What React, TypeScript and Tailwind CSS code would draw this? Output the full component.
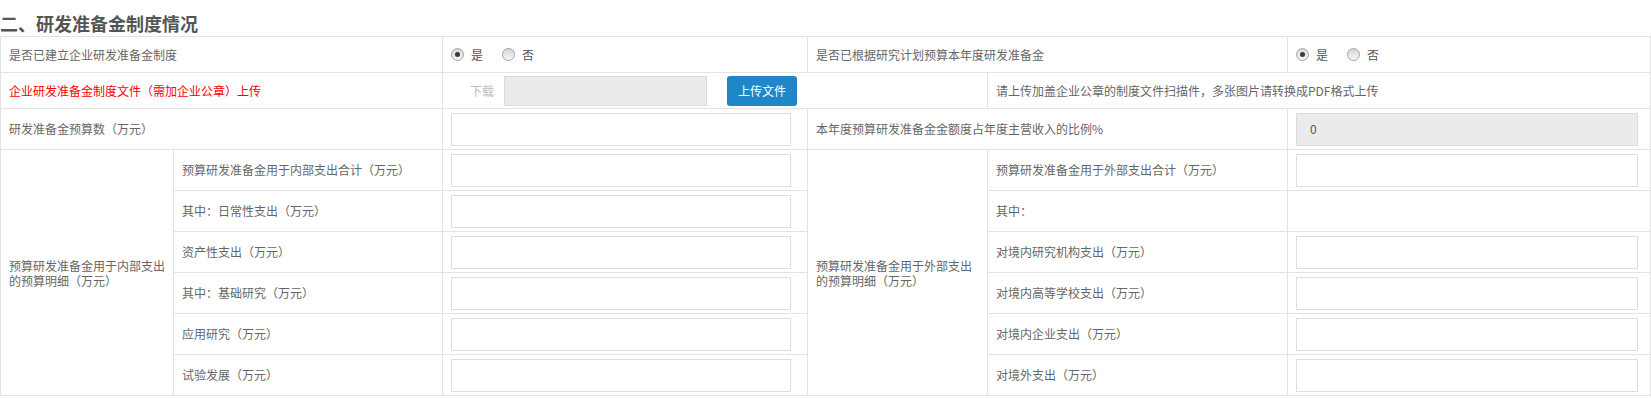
import React from "react";

const font = { fontFamily: '"Noto Sans CJK SC", "Noto Sans", sans-serif' };

function Radio({ checked }: { checked?: boolean }) {
  return (
    <span className="w-[13px] h-[13px] rounded-full border border-[#a3a3a3] bg-linear-to-b from-[#d6d6d6] to-[#f7f7f7] flex items-center justify-center shrink-0">
      {checked && <span className="w-[5px] h-[5px] rounded-full bg-[#3a3a3a]" />}
    </span>
  );
}

function YesNo() {
  return (
    <div className="flex items-center text-[#555]">
      <Radio checked />
      <span className="ml-[7px]">是</span>
      <span className="ml-[19px]">
        <Radio />
      </span>
      <span className="ml-[7px]">否</span>
    </div>
  );
}

function Field() {
  return <div className="w-[340px] h-[33px] border border-[#dedede] bg-white" />;
}

const cell = "border-r border-b border-[#e3e3e3] px-2 flex items-center";

const inner = [
  "预算研发准备金用于内部支出合计（万元）",
  "其中：日常性支出（万元）",
  "资产性支出（万元）",
  "其中：基础研究（万元）",
  "应用研究（万元）",
  "试验发展（万元）",
];

const outer = [
  { label: "预算研发准备金用于外部支出合计（万元）", input: true },
  { label: "其中：", input: false },
  { label: "对境内研究机构支出（万元）", input: true },
  { label: "对境内高等学校支出（万元）", input: true },
  { label: "对境内企业支出（万元）", input: true },
  { label: "对境外支出（万元）", input: true },
];

export default function App() {
  return (
    <div className="w-[1651px] h-[398px] bg-white text-[12px] text-[#666]" style={font}>
      {/* 标题 */}
      <div className="h-[36px] pt-[11px] text-[18px] leading-[24px] font-bold text-[#555] whitespace-nowrap">
        二、研发准备金制度情况
      </div>

      <div className="grid grid-cols-[173px_269px_365px_180px_300px_1fr] grid-rows-[36px_36px_41px_41px_41px_41px_41px_41px_41px] border-t border-l border-[#e3e3e3]">
        {/* 第一行 */}
        <div className={`${cell} col-span-2`}>是否已建立企业研发准备金制度</div>
        <div className={cell}>
          <YesNo />
        </div>
        <div className={`${cell} col-span-2`}>是否已根据研究计划预算本年度研发准备金</div>
        <div className={cell}>
          <YesNo />
        </div>

        {/* 上传 */}
        <div className={`${cell} col-span-2 text-[#ff0000]`}>企业研发准备金制度文件（需加企业公章）上传</div>
        <div className="col-span-2 border-r border-b border-[#e3e3e3] pl-[27px] flex items-center">
          <span className="text-[#bdbdbd]">下载</span>
          <div className="ml-[10px] w-[203px] h-[30px] bg-[#ebebeb] border border-[#dcdcdc]" />
          <button className="ml-[20px] w-[70px] h-[30px] rounded-[3px] bg-[#1f87c8] text-white text-[12px]">
            上传文件
          </button>
        </div>
        <div className={`${cell} col-span-2`}>请上传加盖企业公章的制度文件扫描件，多张图片请转换成PDF格式上传</div>

        {/* 预算数 */}
        <div className={`${cell} col-span-2`}>研发准备金预算数（万元）</div>
        <div className={cell}>
          <Field />
        </div>
        <div className={`${cell} col-span-2`}>本年度预算研发准备金金额度占年度主营收入的比例%</div>
        <div className={cell}>
          <div className="w-[342px] h-[33px] bg-[#ebebeb] border border-[#dcdcdc] pl-[13px] flex items-center text-[#555]">0</div>
        </div>

        {/* 明细 */}
        {inner.map((label, i) => (
          <React.Fragment key={i}>
            {i === 0 && (
              <div className={`${cell} row-span-6 leading-[15px] whitespace-nowrap`}>
                <div>
                  预算研发准备金用于内部支出
                  <br />
                  的预算明细（万元）
                </div>
              </div>
            )}
            <div className={cell}>{label}</div>
            <div className={cell}>
              <Field />
            </div>
            {i === 0 && (
              <div className={`${cell} row-span-6 leading-[15px] whitespace-nowrap`}>
                <div>
                  预算研发准备金用于外部支出
                  <br />
                  的预算明细（万元）
                </div>
              </div>
            )}
            <div className={cell}>{outer[i].label}</div>
            <div className={cell}>
              {outer[i].input && <div className="w-[342px] h-[33px] border border-[#dedede] bg-white" />}
            </div>
          </React.Fragment>
        ))}
      </div>
    </div>
  );
}
